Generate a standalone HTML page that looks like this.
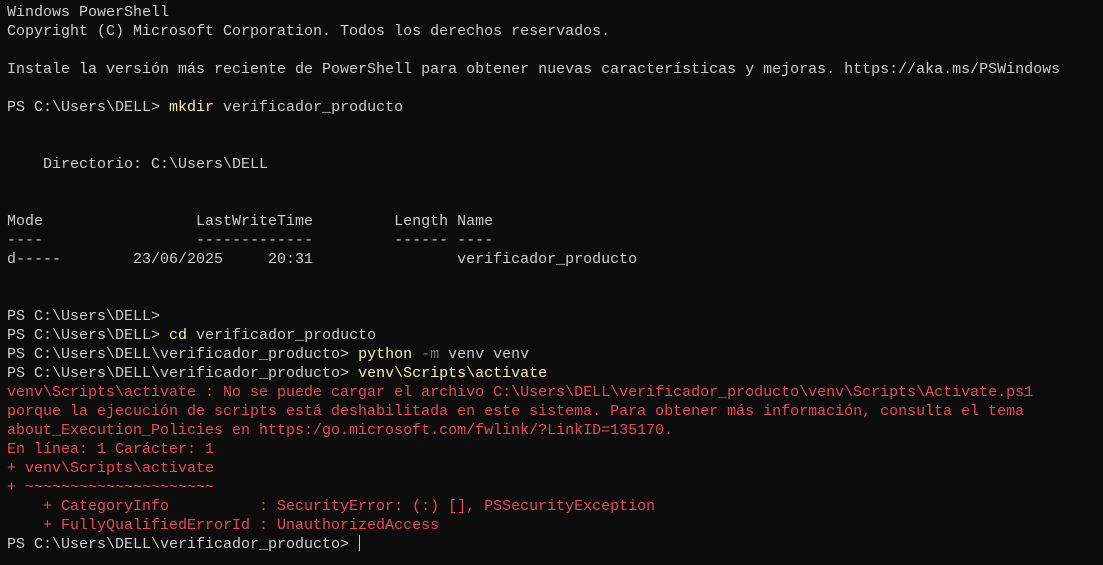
<!DOCTYPE html>
<html><head><meta charset="utf-8"><style>
html,body{margin:0;padding:0;background:#0c0c0c;width:1103px;height:565px;overflow:hidden}
pre{margin:0;padding:3px 0 0 7px;font-family:"Liberation Mono","DejaVu Sans Mono",monospace;font-size:15px;line-height:19px;color:#cccccc;white-space:pre}
.y{color:#f9f1a5}.g{color:#767676}.r{color:#e74856}
.c{display:inline-block;width:1px;height:16px;background:#cccccc;vertical-align:-3px;margin-left:1px}
</style></head><body><pre>Windows PowerShell
Copyright (C) Microsoft Corporation. Todos los derechos reservados.

Instale la versión más reciente de PowerShell para obtener nuevas características y mejoras. https://aka.ms/PSWindows

PS C:\Users\DELL&gt; <span class="y">mkdir</span> verificador_producto


    Directorio: C:\Users\DELL


Mode                 LastWriteTime         Length Name
----                 -------------         ------ ----
d-----        23/06/2025     20:31                verificador_producto


PS C:\Users\DELL&gt;
PS C:\Users\DELL&gt; <span class="y">cd</span> verificador_producto
PS C:\Users\DELL\verificador_producto&gt; <span class="y">python</span> <span class="g">-m</span> venv venv
PS C:\Users\DELL\verificador_producto&gt; <span class="y">venv\Scripts\activate</span>
<span class="r">venv\Scripts\activate : No se puede cargar el archivo C:\Users\DELL\verificador_producto\venv\Scripts\Activate.ps1
porque la ejecución de scripts está deshabilitada en este sistema. Para obtener más información, consulta el tema
about_Execution_Policies en https:/go.microsoft.com/fwlink/?LinkID=135170.
En línea: 1 Carácter: 1
+ venv\Scripts\activate
+ ~~~~~~~~~~~~~~~~~~~~~
    + CategoryInfo          : SecurityError: (:) [], PSSecurityException
    + FullyQualifiedErrorId : UnauthorizedAccess</span>
PS C:\Users\DELL\verificador_producto&gt; <span class="c"></span></pre></body></html>
